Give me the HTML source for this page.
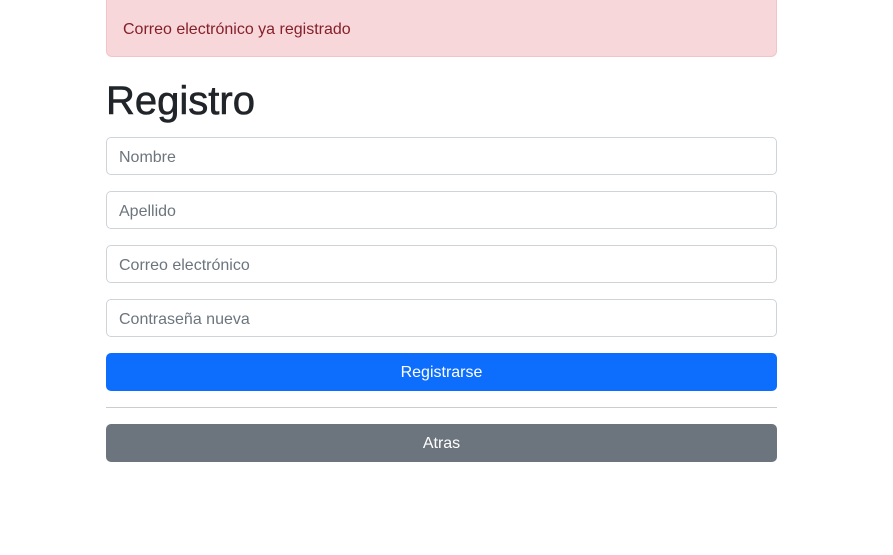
<!DOCTYPE html>
<html><head><meta charset="utf-8"><style>
body{margin:0;background:#fff;font-family:"Liberation Sans",sans-serif;font-size:16px;color:#212529;width:893px;height:555px;overflow:hidden}
.alert{position:absolute;left:106px;top:-1px;width:669px;height:56px;background:#f8d7da;border:1px solid #f5c2c7;border-radius:0 0 6px 6px;color:#842029;box-sizing:content-box}
.alert span{position:absolute;left:16px;top:21px;font-size:16px}
h1{position:absolute;left:106px;top:79px;margin:0;font-size:40px;font-weight:500;line-height:44px;-webkit-text-stroke:0.6px #212529}
.in{position:absolute;left:106px;width:669px;height:36px;border:1px solid #ced4da;border-radius:5px;color:#6c757d;font-size:16px}
.in span{position:absolute;left:12px;top:11px}
.btn{position:absolute;left:106px;width:671px;height:38px;border-radius:5px;color:#fff;text-align:center;line-height:40px;font-size:16px}
hr{position:absolute;left:106px;width:671px;margin:0;border:0;border-top:1px solid #ccc}
</style></head><body>
<div class="alert"><span>Correo electrónico ya registrado</span></div>
<h1>Registro</h1>
<div class="in" style="top:137px"><span>Nombre</span></div>
<div class="in" style="top:191px"><span>Apellido</span></div>
<div class="in" style="top:245px"><span>Correo electrónico</span></div>
<div class="in" style="top:299px"><span>Contraseña nueva</span></div>
<div class="btn" style="top:353px;background:#0d6efd">Registrarse</div>
<hr style="top:407px">
<div class="btn" style="top:424px;background:#6c757d">Atras</div>
</body></html>
